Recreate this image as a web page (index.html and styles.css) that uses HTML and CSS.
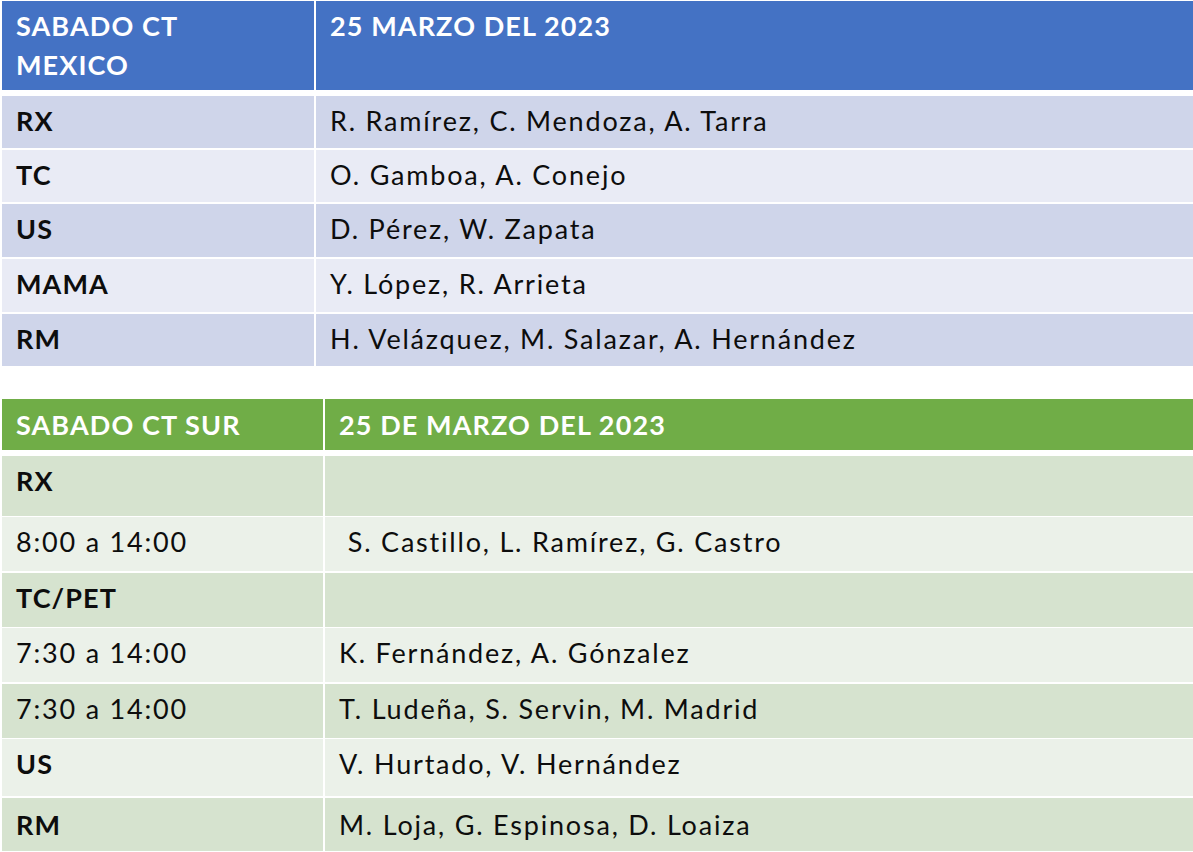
FILE: index.html
```html
<!DOCTYPE html>
<html lang="es">
<head>
<meta charset="utf-8">
<title>Sábado CT</title>
<link rel="stylesheet" href="styles.css">
</head>
<body>
<div class="page">
  <div class="sched sched-blue">
    <div class="cell head">SABADO CT<br>MEXICO</div>
    <div class="cell head">25 MARZO DEL 2023</div>
    <div class="cell b1 bold">RX</div><div class="cell b1">R. Ramírez, C. Mendoza, A. Tarra</div>
    <div class="cell b2 bold">TC</div><div class="cell b2">O. Gamboa, A. Conejo</div>
    <div class="cell b1 bold">US</div><div class="cell b1">D. Pérez, W. Zapata</div>
    <div class="cell b2 bold">MAMA</div><div class="cell b2">Y. López, R. Arrieta</div>
    <div class="cell b1 bold">RM</div><div class="cell b1">H. Velázquez, M. Salazar, A. Hernández</div>
  </div>

  <div class="sched sched-green">
    <div class="cell head">SABADO CT SUR</div>
    <div class="cell head">25 DE MARZO DEL 2023</div>
    <div class="cell b1 bold">RX</div><div class="cell b1"></div>
    <div class="cell b2">8:00 a 14:00</div><div class="cell b2 indent"> S. Castillo, L. Ramírez, G. Castro</div>
    <div class="cell b1 bold">TC/PET</div><div class="cell b1"></div>
    <div class="cell b2">7:30 a 14:00</div><div class="cell b2">K. Fernández, A. Gónzalez</div>
    <div class="cell b1">7:30 a 14:00</div><div class="cell b1">T. Ludeña, S. Servin, M. Madrid</div>
    <div class="cell b2 bold">US</div><div class="cell b2">V. Hurtado, V. Hernández</div>
    <div class="cell b1 bold">RM</div><div class="cell b1">M. Loja, G. Espinosa, D. Loaiza</div>
  </div>
</div>
</body>
</html>
```

FILE: styles.css
```css
html, body {
  margin: 0;
  padding: 0;
  background: #ffffff;
}

.page {
  width: 1193px;
  height: 852px;
  overflow: hidden;
  padding: 1px 0 0 2px;
  box-sizing: border-box;
  font-family: Lato, "Open Sans", sans-serif;
  font-size: 27px;
  color: #0d0d0d;
}

.sched {
  display: grid;
  column-gap: 2px;
  row-gap: 2px;
  width: 1195px;
}

.cell {
  display: flex;
  align-items: flex-start;
  padding: 5px 0 0 14px;
  line-height: 39px;
  letter-spacing: 1.8px;
  white-space: nowrap;
  box-sizing: border-box;
}

.head {
  color: #ffffff;
  font-weight: 700;
  letter-spacing: 1.1px;
  margin-bottom: 4px;
}

.bold {
  font-weight: 700;
  letter-spacing: 1.1px;
}

/* Blue table */
.sched-blue {
  grid-template-columns: 312px 1fr;
  grid-template-rows: auto 52px 52px 53px 53px 52px;
}
.sched-blue .head {
  background: #4472c4;
  height: 89px;
  padding-top: 5px;
}
.sched-blue .b1 { background: #cfd5ea; }
.sched-blue .b2 { background: #e9ebf5; }

/* Green table */
.sched-green {
  margin-top: 33px;
  grid-template-columns: 321px 1fr;
  grid-template-rows: auto 60px 54px 54px 54px 54px 57px 53px;
  row-gap: 1.5px;
}
.sched-green .head {
  background: #70ad47;
  height: 51px;
  padding-top: 6px;
}
.sched-green .b1 { background: #d6e3cf; }
.sched-green .b2 { background: #ebf1e9; }
.sched-green .b1:nth-last-child(-n+2) { padding-top: 7px; }

.indent { white-space: pre; }
```
